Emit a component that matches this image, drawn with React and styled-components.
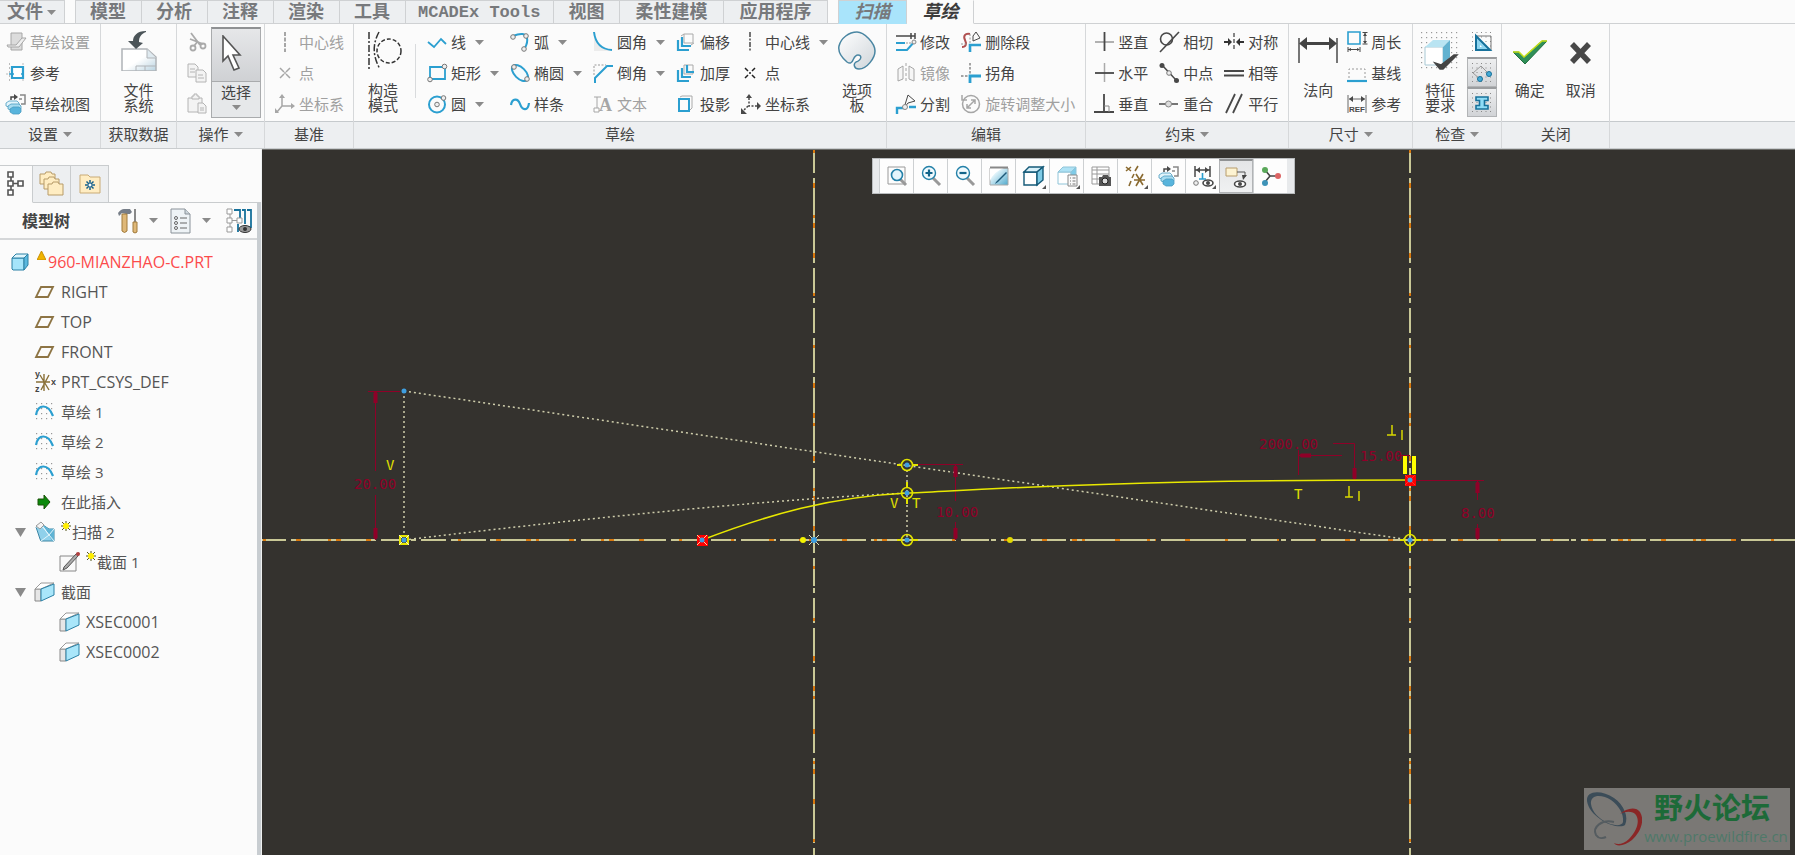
import React from "react";
import styled, { createGlobalStyle, css } from "styled-components";

const BLUE = "#2b9fd0";
const DARK = "#484848";
const GREY = "#a6a6a6";

const GlobalStyle = createGlobalStyle`
  * { box-sizing: border-box; }
  body { margin: 0; background: #fbfbfb; overflow: hidden; }
  button { font: inherit; color: inherit; border: 0; padding: 0; background: none; }
  ul { list-style: none; margin: 0; padding: 0; }
`;

const Shell = styled.div`
  display: flex;
  flex-direction: column;
  height: 100vh;
  font-family: "Open Sans", "Noto Sans CJK SC", sans-serif;
  font-size: 15px;
  color: #444;
  background: #fbfbfb;
`;

/* ---------- tab strip ---------- */

const TabStrip = styled.nav`
  position: relative;
  display: flex;
  height: 24px;
  flex: none;
  border-bottom: 1px solid #cfd1d3;
`;

const Tab = styled.button`
  height: 24px;
  padding: 1px ${(p) => (p.$latin ? "13px" : p.$wide ? "16px" : "15px")} 0 ${(p) => (p.$latin ? "12px" : p.$wide ? "15px" : "14px")};
  display: flex;
  align-items: center;
  flex: none;
  gap: 4px;
  background: #edeff1;
  border: 1px solid #cfd1d3;
  border-left-width: ${(p) => (p.$first ? "1px" : "0")};
  color: #77797c;
  font-family: "Liberation Mono", "Noto Sans CJK SC", monospace;
  font-size: ${(p) => (p.$latin ? "17px" : "18px")};
  font-weight: 700;
  line-height: 20px;
  white-space: nowrap;
  ${(p) => p.$file && css`padding: 1px 8px 0 7px; border-left: 0;`}
  ${(p) => p.$context && css`background: #a9e4fb; font-style: italic; padding: 1px 16px 0 15px; border-bottom-color: #a9e4fb;`}
  ${(p) => p.$active && css`background: #fbfbfb; color: #3c3c3c; font-style: italic; border-color: #fbfbfb #cfd1d3 #fbfbfb #fbfbfb; padding: 1px 15px 0;`}
`;

const TabGap = styled.span`
  width: 10px;
  flex: none;
`;

const Collapse = styled.button`
  margin-left: auto;
  width: 16px;
  height: 8px;
  overflow: hidden;
`;

/* ---------- ribbon ---------- */

const Ribbon = styled.header`
  display: flex;
  flex: none;
  border-bottom: 1px solid #c9ccce;
  background: #fbfbfb;
`;

const GroupBox = styled.section`
  display: flex;
  flex-direction: column;
  flex: ${(p) => (p.$fill ? "1" : "none")};
  border-right: ${(p) => (p.$fill ? "0" : "1px solid #d6d8da")};
`;

const GroupBody = styled.div`
  display: flex;
  height: 97px;
  padding: ${(p) => p.$pad || "0"};
`;

const GroupLabel = styled.div`
  display: flex;
  align-items: center;
  justify-content: center;
  gap: 5px;
  height: 27px;
  padding-bottom: 2px;
  line-height: 20px;
  background: #edeff1;
  border-top: 1px solid #c6cacd;
  white-space: nowrap;
`;

const Columns = styled.div`
  display: flex;
  gap: 11px;
  padding-top: 3px;
`;

const Column = styled.div`
  display: flex;
  flex-direction: column;
  gap: ${(p) => (p.$tight ? "0" : "1px")};
`;

const ToolRow = styled.div`
  display: flex;
  align-items: center;
  height: 30px;
`;

const Tool = styled.button`
  display: flex;
  align-items: center;
  gap: 4px;
  height: 30px;
  line-height: 20px;
  white-space: nowrap;
  color: ${(p) => (p.$off ? "#a0a0a0" : "#444")};
`;

const DropButton = styled.button`
  display: flex;
  align-items: center;
  height: 30px;
  padding-left: 9px;
`;

const BigTool = styled.button`
  display: flex;
  flex-direction: column;
  align-items: center;
  width: ${(p) => p.$width};
  height: 97px;
  padding-top: 7px;
  gap: 11px;
  line-height: 15px;
`;

const BigText = styled.span`
  width: 30px;
  padding-top: 1px;
`;

const Divider = styled.span`
  width: 1px;
  height: 54px;
  margin: 20px 11px 0 3px;
  background: #d9dbdd;
`;

const SelectTool = styled.button`
  display: flex;
  flex-direction: column;
  width: 50px;
  height: 91px;
  margin: 3px 3px 0 4px;
  border: 1px solid #a9abad;
  border-top: 2px solid #8f9193;
  background: #e6e8ea;
`;

const SelectTop = styled.span`
  display: flex;
  align-items: center;
  justify-content: center;
  width: 100%;
  height: 53px;
  background: linear-gradient(#e6e7e9, #cfd1d4);
  border-bottom: 1px solid #a9abad;
`;

const SelectBottom = styled.span`
  display: flex;
  flex-direction: column;
  align-items: center;
  width: 100%;
  gap: 3px;
  line-height: 20px;
`;

const Toggle = styled.button`
  display: flex;
  align-items: center;
  justify-content: center;
  width: 30px;
  height: 30px;
  ${(p) => p.$on && css`
    border: 1px solid #b2b4b6;
    border-top: 2px solid #9b9d9f;
    background: linear-gradient(#eeeff0, #d2d4d7);
  `}
`;

/* ---------- workspace ---------- */

const Workspace = styled.main`
  display: flex;
  flex: 1;
  min-height: 0;
`;

const Sidebar = styled.aside`
  display: flex;
  flex-direction: column;
  flex: none;
  width: 262px;
  padding-top: 16px;
  border-right: 1px solid #eef0f0;
  background: #fbfbfb;
`;

const SideTabs = styled.div`
  display: flex;
  height: 38px;
`;

const SideTab = styled.button`
  display: flex;
  align-items: center;
  justify-content: center;
  width: ${(p) => (p.$active ? "33px" : "38px")};
  height: 38px;
  border: 1px solid #c9ccce;
  border-left-width: 0;
  background: #edeff1;
  ${(p) => p.$active && css`background: #fbfbfb; border-bottom-color: #fbfbfb;`}
`;

const SideTabRest = styled.span`
  flex: 1;
  border-bottom: 1px solid #c9ccce;
`;

const SidePanel = styled.div`
  flex: 1;
  border-right: 4px solid #c8cdd1;
`;

const SideHeader = styled.div`
  display: flex;
  align-items: center;
  height: 37px;
  padding: 0 5px 0 22px;
  border-bottom: 2px solid #d5d7d9;
`;

const SideTitle = styled.h2`
  margin: 0;
  flex: 1;
  font-size: 16px;
  line-height: 20px;
`;

const HeaderButton = styled.button`
  display: flex;
  align-items: center;
  gap: 10px;
  margin-left: ${(p) => p.$space};
`;

const Tree = styled.ul`
  padding-top: 7px;
`;

const TreeRow = styled.li`
  display: flex;
  align-items: center;
  height: 30px;
  line-height: 20px;
  padding-left: ${(p) => [11, 35, 60][p.$level]}px;
  font-size: ${(p) => (p.$latin ? "16px" : "15px")};
  color: ${(p) => (p.$alert ? "#fb4b4b" : "#555")};
  white-space: nowrap;
`;

const Expander = styled.button`
  display: flex;
  width: 20px;
  margin-left: -20px;
`;

const TreeIcon = styled.span`
  display: flex;
  width: 26px;
`;

const Flag = styled.span`
  display: flex;
  height: 22px;
  width: 11px;
`;

/* ---------- canvas ---------- */

const Canvas = styled.div`
  position: relative;
  flex: 1;
  min-width: 0;
  overflow: hidden;
  background: #34322e;
  border-top: 1px solid #6d6d6a;
`;

const Drawing = styled.svg`
  display: block;
  width: 100%;
  height: 100%;
`;

const DimText = styled.text`
  font-family: "DejaVu Sans Mono", monospace;
  font-size: 14px;
  fill: #8f0028;
`;

const MarkText = styled.text`
  font-family: "DejaVu Sans Mono", monospace;
  font-size: 14px;
  fill: #e0e000;
`;

const ViewBar = styled.div`
  position: absolute;
  top: 8px;
  left: 610px;
  display: flex;
  height: 36px;
  padding: 0 7px 0 6px;
  border: 1px solid #b9bcbe;
  background: #e8eaec;
`;

const ViewButton = styled.button`
  display: flex;
  align-items: center;
  justify-content: center;
  position: relative;
  width: 34px;
  height: 34px;
  background: #fdfdfd;
  border-left: 1px solid #cdd0d2;
  ${(p) => p.$on && css`
    background: linear-gradient(#e4e5e7, #f0f1f2);
    border: 1px solid #b2b4b6;
    border-top: 2px solid #8f9193;
  `}
`;

const Corner = styled.span`
  position: absolute;
  right: 3px;
  bottom: 4px;
  border: 2px solid #555;
  border-top-color: transparent;
  border-left-color: transparent;
`;

const Watermark = styled.div`
  position: absolute;
  right: 5px;
  bottom: 5px;
  display: flex;
  justify-content: space-between;
  width: 206px;
  height: 62px;
  background: #7a7875;
`;

const WatermarkText = styled.div`
  display: flex;
  flex-direction: column;
  align-items: center;
  width: 148px;
  flex: none;
`;

const WatermarkName = styled.strong`
  padding-right: 8px;
  font-size: 29px;
  line-height: 39px;
  color: #1d6a38;
`;

const WatermarkLink = styled.a`
  font-size: 15px;
  line-height: 18px;
  color: #4f7869;
  text-decoration: none;
`;

/* ---------- icons ---------- */

const dots = (n, step, off, r, color) => {
  const out = [];
  for (let i = 0; i < n; i++)
    for (let j = 0; j < n; j++)
      out.push(<rect key={`${i}-${j}`} x={off + i * step} y={off + j * step} width={r} height={r} fill={color} />);
  return out;
};

const Knob = ({ x, y }) => <circle cx={x} cy={y} r="2.3" fill="#eee" stroke="#777" strokeWidth="1" />;

const glyphs = {
  setup: <g fill="#dcdcdc" stroke={GREY}><path d="M5 1h11v17H5z" /><path d="M1 13h9l6-7h4l-7 9H2z" fill="#eee" /></g>,
  refs: <g fill="none"><path d="M3.500 0v20M0 11h20M17 0v20" stroke="#bbb" strokeDasharray="2 2" /><path d="M6 4h11v11H6z" fill="#fff" stroke={BLUE} strokeWidth="2.200" /><path d="M3 11h5M15 11h3" stroke={BLUE} strokeWidth="1.500" /></g>,
  sketchView: <g><path d="M5 6V3h5" fill="none" stroke={DARK} strokeWidth="1.500" /><path d="M8 0l4 3-4 3z" fill={DARK} /><path d="M14 1h5v9h-4M13 5h3" fill="none" stroke="#888" strokeWidth="1.500" /><g stroke="#4a9cc0" strokeWidth=".8"><path d="M0 9l3-2h8l2 2v3l-2 1H3L0 12z" fill="#e2f4fb" /><path d="M2 12l3-2h8l2 2v3l-2 1H5l-3-1z" fill="#a8dcf0" /><path d="M4 15l3-2h6l2 2v3l-2 2H7l-3-2z" fill="#58b4dc" /></g></g>,
  cut: <g stroke="#aaa" strokeWidth="1.800" fill="none"><path d="M4 1l9 12M3 7l13 5" /><circle cx="16" cy="14" r="2.500" /><circle cx="6" cy="16" r="2.500" /><path d="M7 14l4-5" /></g>,
  copy: <g fill="#f3f3f3" stroke="#b4b4b4"><path d="M1 1h7l3 3v10H1z" /><path d="M9 7h7l3 3v9H9z" /><path d="M3 6h5M3 9h5M11 12h5M11 15h6" /></g>,
  paste: <g fill="#f3f3f3" stroke="#b4b4b4"><path d="M1 4h14v14H1z" /><path d="M5 5V2h2V0h3v2h2v3z" /><path d="M11 9h5l3 3v7h-8z" /><path d="M13 14h4M13 16h4" /></g>,
  centerGrey: <path d="M10 0v20" stroke={GREY} strokeWidth="2" strokeDasharray="4 1.500" />,
  pointGrey: <g stroke={GREY} strokeWidth="1.500"><path d="M5 5l4 4M11 11l4 4M15 5l-4 4M9 11l-4 4M9 10h2" /></g>,
  csysGrey: <g stroke={GREY} strokeWidth="1.500" fill={GREY}><path d="M7 3v9h10M7 12l-5 6" fill="none" /><path d="M7 0l3 4H4zM20 12l-4-3v6zM0 19v-5l4 5z" strokeWidth="0" /></g>,
  line: <path d="M1 10l6 5 7-8 5 5" fill="none" stroke={BLUE} strokeWidth="1.800" />,
  rect: <g><path d="M3 4h15v12H3z" fill="none" stroke={BLUE} strokeWidth="1.800" /><Knob x={17.500} y={3.500} /><Knob x={3} y={16.500} /></g>,
  circle: <g><circle cx="10" cy="10.500" r="8" fill="none" stroke={BLUE} strokeWidth="2" /><Knob x={10} y={10.500} /><Knob x={16.500} y={4} /></g>,
  arc: <g><path d="M3 4q12-5 14 2 1 4-2 10" fill="none" stroke={BLUE} strokeWidth="2" /><Knob x={3} y={5} /><Knob x={16} y={4} /><Knob x={14} y={17} /></g>,
  ellipse: <g><ellipse cx="10" cy="10" rx="10" ry="5.500" transform="rotate(45 10 10)" fill="#f5fbfd" stroke={BLUE} strokeWidth="2" /><Knob x={4} y={4} /><Knob x={17} y={16} /></g>,
  spline: <path d="M1 11c1-7 7-7 9-1s8 8 9-1" fill="none" stroke={BLUE} strokeWidth="2.200" />,
  fillet: <g><path d="M1 1v18h18Q4 15 1 1z" fill="#ececec" /><path d="M1 0q2 17 18 18" fill="none" stroke={BLUE} strokeWidth="2" /></g>,
  chamfer: <g fill="none"><path d="M1 12V2h12" stroke="#999" strokeDasharray="2 1.500" /><path d="M2 20v-5L14 3h6" stroke={BLUE} strokeWidth="2" /></g>,
  text: <g><path d="M4 3v12M1 3h7" stroke={GREY} fill="none" /><path d="M1 14h5v4H1z" fill="#fff" stroke={GREY} /><text x="6" y="17" fontFamily="Liberation Serif" fontWeight="700" fontSize="18" fill={GREY}>A</text></g>,
  offset: <g fill="none"><path d="M8 2h9v9H8zM5 4l3-2M15 13l3-2" stroke="#aaa" /><path d="M6 5v9h9" stroke={BLUE} strokeWidth="2.200" /><path d="M2 8v10h11" stroke={BLUE} strokeWidth="2.200" /></g>,
  thicken: <g fill="none"><path d="M8 2h9v9H8z" stroke="#aaa" /><path d="M2 7v11h11M6 5v9h9M11 2v7h7" stroke={BLUE} strokeWidth="2.200" /></g>,
  project: <g fill="none"><path d="M3 5h10v12H3z" stroke={BLUE} strokeWidth="2" /><path d="M4 3l2-1h10v12l-2 2" stroke="#aaa" /></g>,
  center: <path d="M9 0v20" stroke={DARK} strokeWidth="1.500" strokeDasharray="5 1.500 2 1.500" />,
  point: <g stroke="#222" strokeWidth="1.500"><path d="M4 5l3 3M11 12l3 3M14 5l-3 3M7 12l-3 3M8 10h2" /></g>,
  csys: <g fill={DARK}><path d="M8 4v8h8M7 12l-5 5" fill="none" stroke={DARK} strokeWidth="1.500" strokeDasharray="2 1.500" /><path d="M8 0l3 4H5zM20 12l-4-4v8zM0 20v-6l6 6z" /></g>,
  modify: <g fill="none"><path d="M0 4h19M15 1v6M19 1v6" stroke={DARK} strokeWidth="1.500" /><path d="M0 11h9M0 18h11l8-9" stroke={BLUE} strokeWidth="2" /><path d="M10 11h7" stroke="#999" strokeDasharray="2 1" /><circle cx="18" cy="10" r="2" fill="#eee" stroke="#888" /></g>,
  mirror: <g fill="#f6f6f6" stroke={GREY}><path d="M2 6l5-3v13l-5 2zM18 6l-5-3v13l5 2z" /><path d="M10 0v20" strokeDasharray="3 2" /></g>,
  split: <g fill="none"><path d="M1 20v-6h7M13 13h7" stroke={BLUE} strokeWidth="2.400" /><path d="M8 14l4-13 7 6-7 2z" stroke={DARK} /><circle cx="9" cy="13" r="2.500" fill="#eee" stroke="#888" /></g>,
  del: <g fill="none"><path d="M9 2C4 1 2 4 4 8s1 7-3 7" stroke="#b05050" strokeWidth="2" /><path d="M9 20v-7h11" stroke={BLUE} strokeWidth="2.600" /><path d="M9 2v9M0 12h6" stroke="#999" strokeDasharray="2 1.500" /><path d="M12 4l3-4 4 6-7 3z" stroke={DARK} /></g>,
  corner: <g fill="none"><path d="M9 20v-7h11" stroke={BLUE} strokeWidth="2.800" /><path d="M9 0v11M0 13h7" stroke="#888" strokeWidth="1.500" strokeDasharray="2.500 1.500" /></g>,
  rotate: <g fill="none" stroke={GREY} strokeWidth="1.500"><circle cx="10" cy="10" r="8.500" /><path d="M6 14l8-8M6 10v4h4M10 6h4v4M1 1v5h5" /></g>,
  vert: <g><path d="M1 10h19" stroke="#999" strokeWidth="1.500" /><path d="M10.500 0v19" stroke={DARK} strokeWidth="1.800" /></g>,
  horiz: <g><path d="M10.500 0v19" stroke="#aaa" strokeWidth="1.500" /><path d="M1 10h19" stroke={DARK} strokeWidth="1.800" /></g>,
  perp: <g fill="none"><path d="M10 0v18M0 18h20" stroke={DARK} strokeWidth="1.800" /><path d="M10 12h5v6" stroke="#888" /></g>,
  tangent: <g fill="none" stroke={DARK} strokeWidth="1.600"><circle cx="7.500" cy="7" r="6" /><path d="M1 20L20 0" /></g>,
  mid: <g><path d="M3 2l14 15" stroke={DARK} strokeWidth="1.500" /><circle cx="3" cy="2.500" r="2.500" fill={DARK} /><circle cx="17.500" cy="17.500" r="2.500" fill={DARK} /><Knob x={10} y={10} /></g>,
  coin: <g><path d="M0 10h19" stroke={DARK} strokeWidth="1.500" /><circle cx="9.500" cy="10" r="3" fill="#ddd" stroke="#888" /></g>,
  sym: <g><path d="M10 1v18" stroke="#555" strokeWidth="1.400" strokeDasharray="4 2" /><path d="M0 10h5M15 10h5" stroke="#333" strokeWidth="1.800" /><path d="M8 10L4 6v8zM12 10l4-4v8z" fill="#333" /></g>,
  equal: <path d="M0 8h20M0 12.500h20" stroke={DARK} strokeWidth="1.800" />,
  parallel: <path d="M2 19L11 0M9 19L18 0" stroke={DARK} strokeWidth="1.800" />,
  perim: <g fill="none"><path d="M1 0h12v12H1z" stroke={BLUE} strokeWidth="1.600" /><path d="M15.500.5h5M15.500 12h5M18 1v10M1 15v5M13 15v5M1 17.500h11" stroke={DARK} /><path d="M16 4l2-3 2 3zM16 9l2 3 2-3zM4 16l-3 1.500L4 19zM10 16l3 1.500L10 19z" fill={DARK} /></g>,
  baseline: <g fill="none"><path d="M2 15V6h16v9" stroke="#999" strokeDasharray="2 2" /><path d="M0 18h20" stroke={BLUE} strokeWidth="2.200" /></g>,
  refdim: <g><path d="M1 1v18M19 1v18M2 5h16" stroke="#666" fill="none" /><path d="M6 2L2 5l4 3zM14 2l4 3-4 3z" fill={DARK} /><text x="2" y="18" fontFamily="Liberation Sans" fontWeight="700" fontSize="8" fill={DARK}>REF</text></g>,
  chkTri: <g>{dots(5, 4.500, 0, 1, "#888")}<path d="M4 4h15v14" fill="none" stroke="#777" /><path d="M4 4v14h14z" fill="#8fd5f0" stroke="#17719b" strokeWidth="2" /><path d="M8 13v2h2z" fill="#fff" /></g>,
  chkEnds: <g>{dots(5, 4.500, 0, 1, "#888")}<path d="M8 16L1 10l8-7 8 8" fill="none" stroke="#999" /><circle cx="17" cy="11" r="2.500" fill="#45aad5" stroke="#17719b" /><circle cx="8" cy="16" r="2.500" fill="#45aad5" stroke="#17719b" /></g>,
  chkI: <g>{dots(5, 4.500, 0, 1, "#888")}<path d="M4 4h12v3.500h-3.500v5H16V16H4v-3.500h3.500v-5H4z" fill="#8fdcf6" stroke="#17719b" strokeWidth="1.600" /></g>,

  zoomFit: <g><path d="M1 1h17v17H1z" fill="none" stroke="#999" /><path d="M13 13l6 6" stroke="#999" strokeWidth="3" /><circle cx="10" cy="9" r="5.500" fill="#e4f5fc" stroke="#2380a8" strokeWidth="1.600" /></g>,
  zoomIn: <g><path d="M12 12l7 7" stroke="#999" strokeWidth="3" /><circle cx="8" cy="7" r="6.500" fill="#f0fafe" stroke="#2380a8" strokeWidth="1.400" /><path d="M8 3.500v7M4.500 7h7" stroke="#12648a" strokeWidth="2.200" /></g>,
  zoomOut: <g><path d="M12 12l7 7" stroke="#999" strokeWidth="3" /><circle cx="8" cy="7" r="6.500" fill="#f0fafe" stroke="#2380a8" strokeWidth="1.400" /><path d="M4.500 7h7" stroke="#12648a" strokeWidth="2.200" /></g>,
  repaint: <g><defs><linearGradient id="wipe" x1="0" y1="0" x2="1" y2="1"><stop offset=".3" stopColor="#e4f5fb" /><stop offset="1" stopColor="#4fa9cc" /></linearGradient></defs><path d="M1 2h18v17H1z" fill="url(#wipe)" stroke="#aaa" /><path d="M1 2h14Q4 6 1 15z" fill="#fff" /><path d="M1 1.500h18" stroke="#888" strokeWidth="2" /><path d="M6 18l1-2 10-10 1 1L9 16z" fill="#1d5878" /></g>,
  cube: <g stroke="#155a78" strokeWidth="1.400"><path d="M1 6h13v13H1z" fill="#fff" /><path d="M1 6l5-5h14l-6 5z" fill="#d8f1fa" /><path d="M14 6l6-5v13l-6 5z" fill="#7fcbe6" /></g>,
  views: <g stroke="#8fc4d8"><path d="M1 6h13v12H1z" fill="#fff" /><path d="M1 6l5-5h13l-5 5z" fill="#aee2f5" /><path d="M14 6l5-5v13l-5 4z" fill="#7ecbe8" /><path d="M11 9h9v11h-9z" fill="#fafafa" stroke="#888" /><path d="M13 12h1m1.500 0h3M13 15h1m1.500 0h3M13 18h1m1.500 0h3" stroke="#777" /></g>,
  camera: <g><path d="M1 1h17v17H1zM1 4h17M1 8h17M1 13h8M6 1v17" fill="#fff" stroke="#999" /><path d="M8 11h3l1-2h5l1 2h2v9H8z" fill="#555" /><circle cx="14" cy="15" r="3" fill="#ddd" stroke="#222" /></g>,
  datum: <g stroke="#8a6a30" strokeWidth="1.600" fill="none"><path d="M1 1l5 4M6 1L1 5" /><path d="M13 0l-3 5M9 8l-2 4M6 15l-2 5" /><path d="M11 8l7 11M18 8l-7 12M9 14h11" /></g>,
  dimEye: <g><path d="M2 0v11M17 0v11M2 4h15" stroke={DARK} strokeWidth="1.500" /><path d="M7 1L3 4l4 3zM12 1l4 3-4 3z" fill={DARK} /><path d="M9.500 7v6M6 13h7" stroke={BLUE} strokeWidth="1.600" /><circle cx="3" cy="17" r="2.300" fill="#eee" stroke="#777" /><ellipse cx="15" cy="17" rx="5" ry="3" fill="#fff" stroke={DARK} strokeWidth="1.600" /><circle cx="15" cy="17" r="2" fill={DARK} /></g>,
  noteEye: <g><path d="M0 1h11v8H0z" fill="#fdf3d2" stroke="#b79c6c" /><path d="M11 5h8v5" fill="none" stroke="#555" /><path d="M16 8h5l-4 5z" fill="#444" /><ellipse cx="14" cy="17" rx="5.500" ry="3" fill="#fff" stroke={DARK} strokeWidth="1.600" /><circle cx="14" cy="17" r="2" fill={DARK} /></g>,
  spin: <g><path d="M4 4l5 6-5 6M9 10h7" fill="none" stroke="#444" strokeWidth="1.600" /><circle cx="4" cy="4" r="3" fill="#5aa85a" /><circle cx="4" cy="17" r="3" fill="#3e93b8" /><circle cx="17" cy="10" r="3" fill="#dc6464" /></g>,

  part: <g stroke="#2a80a5"><path d="M1 6h12v12H2l-1-1z" fill="#a5e5fb" /><path d="M1 6l4-4h12l-4 4z" fill="#dff6fd" /><path d="M13 6l4-4v11l-4 5z" fill="#5ab8de" /></g>,
  plane: <path d="M6 5h12l-5 10H1z" fill="none" stroke="#8d7444" strokeWidth="1.800" />,
  treeCsys: <g><path d="M1 10h14M9 2v17M5 3l9 15M14 3L6 18" stroke="#8a7138" strokeWidth="1.400" /><g fontFamily="Liberation Sans" fontWeight="700" fontSize="9" fill="#444"><text x="0" y="5">y</text><text x="16" y="13">x</text><text x="0" y="20">z</text></g></g>,
  sketch: <g>{dots(4, 5, 1, 1.200, "#999")}<path d="M1 13C3 2 13 1 18 14" fill="none" stroke={BLUE} strokeWidth="2.200" /></g>,
  insert: <path d="M3 7h6V3l6 7-6 7v-4H3z" fill="#0c8a0c" stroke="#1a5208" />,
  sweep: <g strokeLinejoin="round"><path d="M1 5l4 12 1 2h13V7h-5L8 3z" fill="#8fd0ea" stroke="#3d86a4" /><path d="M8 3l6 4 5 0v12h-2z" fill="#5fb3d4" /><path d="M8 5l6 8 5-6M6 19l8-6 5 6M1 5l7 0 6 8" fill="none" stroke="#e2f5fc" /><path d="M1 4l5-4 3 3-4 4z" fill="#f4f4f4" stroke="#999" /></g>,
  section: <g><path d="M0 4h16v15H0z" fill="#f9f9f9" stroke="#888" /><path d="M4 15L16 2l3-1-1 3L7 16l-4 2z" fill="#aaa" stroke="#555" /><circle cx="18" cy="2" r="2" fill="#b04040" /></g>,
  xsec: <g><path d="M0 7h6v12H0z" fill="#e6e6e6" stroke="#888" /><path d="M0 7l6-6h13L6 7z" fill="#fff" stroke="#999" /><path d="M6 7l13-5v11L6 19z" fill="#a9e6fa" stroke="#2a80a5" /></g>,
};

const Icon = ({ name, size = 20 }) => (
  <svg width={size} height={size} viewBox="0 0 20 20" overflow="visible" aria-hidden="true">
    {glyphs[name]}
  </svg>
);

const Arrow = ({ size = 9, color = "#8a8a8a" }) => (
  <svg width={size} height={size === 9 ? 5 : 9} viewBox="0 0 9 5" preserveAspectRatio="none" aria-hidden="true">
    <path d="M0 0h9L4.500 5z" fill={color} />
  </svg>
);

const bigGlyphs = {
  file: <g><defs><linearGradient id="sheet" x1="0" y1="0" x2="1" y2="1"><stop offset=".5" stopColor="#fff" /><stop offset="1" stopColor="#b8d2e0" /></linearGradient></defs><path d="M3 18h25l9 8v14H3z" fill="url(#sheet)" stroke="#b0b4b8" strokeWidth="1.500" /><path d="M28 18v9h9" fill="#dfeaf0" stroke="#b0b4b8" /><path d="M17 40v-5h20M26 35v5" stroke="#b0b4b8" fill="none" /><path d="M27 0C18 0 14 5 14 10H9l8 8 7-6-4-1c0-5 2-8 7-10z" fill="#4b5458" /></g>,
  construct: <g fill="none" stroke="#333" strokeWidth="1.500"><path d="M6 1v37" strokeDasharray="7 2 2 2" /><path d="M16 1q-10 18 1 37" strokeDasharray="7 2 2 2" /><circle cx="26" cy="20" r="12" strokeDasharray="4 2" /></g>,
  palette: <g><defs><linearGradient id="pal" x1="0" y1="0" x2="1" y2="1"><stop offset="0" stopColor="#fff" /><stop offset="1" stopColor="#cfd5da" /></linearGradient></defs><path d="M10 31C4 26 1 20 2 15 4 7 12 1 20 1c7 0 18 11 18 19 0 7-8 18-16 18-5 0-6-5-3-7 6-2 6-7 2-7-3 0-4 3-5 5-1 3-3 4-6 2z" fill="url(#pal)" stroke="#4a86a2" strokeWidth="1.500" /></g>,
  normal: <g><path d="M1 7v25M39 7v25M6 12h28" stroke="#555" strokeWidth="1.600" /><path d="M6 12.500h28" stroke="#444" strokeWidth="3" /><path d="M9 6L1 12.500 9 19zM31 6l8 6.500L31 19z" fill="#444" /></g>,
  feature: <g>{dots(8, 5, 1, 1.200, "#999")}<path d="M5 16h18v18H5z" fill="#fff" stroke="#a8c8d4" /><path d="M5 16l8-7h17l-7 7z" fill="#b9e4f2" /><path d="M23 16l7-7v17l-7 8z" fill="#62b2d0" /><path d="M15 32l6 2L34 24h3L23 38h-3z" fill="#444" stroke="#444" strokeWidth="1.500" /></g>,
  ok: <g><path d="M3 21h6l5 5L32 10h5L15 33z" fill="#2f8f58" stroke="#22703f" /><path d="M3 21h6l5 5L32 10h5" fill="none" stroke="#c4e01a" strokeWidth="1.500" /></g>,
  cancel: <path d="M11 13l17 18M28 13L11 31" stroke="#484848" strokeWidth="5.500" fill="none" />,
  pointer: <path d="M7 1v25l5-5 6 14 5-2-6-13h7z" fill="#fff" stroke="#555" strokeWidth="1.600" />,
};

const BigIcon = ({ name }) => (
  <svg width="40" height="40" viewBox="0 0 40 40" aria-hidden="true">
    {bigGlyphs[name]}
  </svg>
);

const ToolColumn = ({ items }) => (
  <Column>
    {items.map(([icon, label, drop, off, name]) => (
      <ToolRow key={icon}>
        <Tool $off={off} disabled={!!off} aria-label={name}>
          <Icon name={icon} />
          {label}
        </Tool>
        {drop && (
          <DropButton aria-label={`${label} 选项`}>
            <Arrow />
          </DropButton>
        )}
      </ToolRow>
    ))}
  </Column>
);

const Big = ({ icon, label, width }) => (
  <BigTool $width={width}>
    <BigIcon name={icon} />
    <BigText>{label}</BigText>
  </BigTool>
);

const Group = ({ label, drop, pad, fill, children }) => (
  <GroupBox $fill={fill}>
    <GroupBody $pad={pad}>{children}</GroupBody>
    <GroupLabel>
      {label}
      {drop && <Arrow />}
    </GroupLabel>
  </GroupBox>
);

/* ---------- sidebar ---------- */

const TreeTabIcon = () => (
  <svg width="18" height="26" viewBox="0 0 18 26" fill="#fff" stroke="#555" strokeWidth="1.600" aria-hidden="true">
    <path d="M4 6v14M6 12.500h6" />
    <path d="M1 1h5v5H1zM1 10h5v5H1zM1 19h5v5H1zM11 10h5v5h-5z" />
  </svg>
);

const FoldersIcon = () => (
  <svg width="26" height="26" viewBox="0 0 26 26" fill="#ffedc2" stroke="#b79b68" aria-hidden="true">
    <path d="M1 3h5l1-2h5l1 2h3v10H1z" />
    <path d="M5 8h4l1-2h5l1 2h4v10H5z" />
    <path d="M9 13h4l1-2h5l1 2h4v11H9z" />
  </svg>
);

const FavoriteIcon = () => (
  <svg width="24" height="22" viewBox="0 0 24 22" aria-hidden="true">
    <path d="M2 4V2h8l2 2h10v16H2z" fill="#ffedc2" stroke="#c9ab76" />
    <path d="M12 7v10M7 12h10M8.500 8.500l7 7M15.500 8.500l-7 7" stroke="#17628c" strokeWidth="1.500" />
    <circle cx="12" cy="12" r="1.500" fill="#fff" />
  </svg>
);

const ToolsIcon = () => (
  <svg width="22" height="26" viewBox="0 0 22 26" aria-hidden="true">
    <path d="M1 5q3-4 6-4h6l2 3-2 2H9L5 5 2 8z" fill="#777e88" />
    <path d="M5 6h5v17q-2.500 3-5 0z" fill="#dfb878" stroke="#a07a3c" />
    <path d="M18 1v14" stroke="#888" strokeWidth="2" />
    <path d="M16 14h4v10q-2 2-4 0z" fill="#dfb878" stroke="#a07a3c" />
  </svg>
);

const ListIcon = () => (
  <svg width="22" height="26" viewBox="0 0 22 26" aria-hidden="true">
    <path d="M1 1h14l5 5v19H1z" fill="#eef3f6" stroke="#8a9299" />
    <path d="M15 1v5h5" fill="#cdd6dc" stroke="#8a9299" />
    <path d="M10 10h7M10 15h7M10 20h7" stroke="#666" />
    <g fill="none" stroke="#666"><circle cx="6" cy="10" r="1.500" /><circle cx="6" cy="15" r="1.500" /><circle cx="6" cy="20" r="1.500" /></g>
  </svg>
);

const TreeColumnsIcon = () => (
  <svg width="26" height="26" viewBox="0 0 26 26" fill="none" aria-hidden="true">
    <path d="M4 6v14M6 12.500h6" stroke="#999" />
    <path d="M8 2h6v8M16 2h3v14M21 2h4v17h-3M12 16v8" stroke="#17719b" strokeWidth="1.800" />
    <path d="M1 1h5v5H1zM1 10h5v5H1zM1 19h5v5H1zM11 10h5v5h-5z" fill="#fff" stroke="#999" />
    <ellipse cx="19" cy="21" rx="6" ry="3.500" fill="#999" stroke="#333" />
    <circle cx="19" cy="21" r="2" fill="#333" />
  </svg>
);

const Warning = () => (
  <svg width="9" height="9" viewBox="0 0 9 9" aria-hidden="true">
    <path d="M4.500 0L9 9H0z" fill="#f0b400" stroke="#c98f00" />
  </svg>
);

const Fresh = () => (
  <svg width="10" height="10" viewBox="0 0 10 10" aria-hidden="true">
    <path d="M5 0v10M0 5h10M1 1l8 8M9 1L1 9" stroke="#55551a" />
    <circle cx="5" cy="5" r="3" fill="#ffee00" />
  </svg>
);

const tree = [
  [0, "part", "960-MIANZHAO-C.PRT", "warn"],
  [1, "plane", "RIGHT"],
  [1, "plane", "TOP"],
  [1, "plane", "FRONT"],
  [1, "treeCsys", "PRT_CSYS_DEF"],
  [1, "sketch", "草绘 1"],
  [1, "sketch", "草绘 2"],
  [1, "sketch", "草绘 3"],
  [1, "insert", "在此插入"],
  [1, "sweep", "扫描 2", "new", true],
  [2, "section", "截面 1", "new"],
  [1, "xsec", "截面", null, true],
  [2, "xsec", "XSEC0001"],
  [2, "xsec", "XSEC0002"],
];

/* ---------- sketch drawing ---------- */

const Axis = ({ d }) => (
  <g fill="none" strokeWidth="2">
    <path d={d} stroke="#c9c896" />
    <path d={d} stroke="#d9770c" strokeDasharray="5 27 3 5 5 25 5 35 3 49 3 35 5 25 5 5 3 30" strokeDashoffset="-34" />
    <path d={d} stroke="#34322e" strokeDasharray="5 85 5 28 2 5 5 25 5 35 4 86" strokeDashoffset="-24" />
  </g>
);

const ticks = {
  h: "M-10 0h5M6 0h5",
  v: "M0-11v5M0 6v5",
  both: "M-10 0h5M6 0h5M0-10v5M0 6v5",
};

const Node = ({ x, y, tick }) => (
  <g transform={`translate(${x} ${y})`} fill="none" stroke="#e2e200" strokeWidth="1.600">
    <circle r="5.500" />
    <path d={ticks[tick]} strokeWidth="2" />
    <circle r="2.500" fill="#3f9fe0" stroke="none" />
  </g>
);

const EndPoint = ({ x, y, fill, cross = "#ffd0a0" }) => (
  <g transform={`translate(${x} ${y})`}>
    <rect x="-5" y="-5" width="11" height="11" fill={fill} />
    <path d="M-5-5L5 5M5-5L-5 5" stroke={cross} />
    <circle r="2.500" fill="#3f9fe0" />
  </g>
);

const SketchDrawing = () => (
  <Drawing role="img" aria-label="草绘截面">
    <g transform="translate(-262 -150)">
      <Axis d="M814 149V2000" />
      <Axis d="M1410 149V2000" />
      <Axis d="M262 540H4000" />
      <g fill="none" stroke="#cfceac" strokeWidth="1.500" strokeDasharray="2 3">
        <path d="M404 391v149M404 391L1410 540M404 540Q720 502 907 493M907 465v75" />
      </g>
      <g fill="none" stroke="#8f0028" strokeWidth="1">
        <path d="M368 391.500h32M375.500 392v79M375.500 495v45M912 464.500h51M955.500 465v36M955.500 522v18" />
        <path d="M1333 443.500h21.500v36M1298.500 450v25M1298 455.500h44M1398 455.500h12M1415 480.500h69M1477.500 481v19M1477.500 524v15" />
      </g>
      <g fill="#8f0028">
        <path d="M375.500 391l2 2v10h-4v-10zM375.500 540l2-2v-10h-4v10zM955.500 465l2 2v10h-4v-10zM955.500 540l2-2v-10h-4v10zM1354.500 480l2-2v-10h-4v10zM1299 455.500l2-2h10v4h-10zM1477.500 481l2 2v10h-4v-10zM1477.500 540l2-2v-10h-4v10z" />
      </g>
      <DimText x="354" y="489">20.00</DimText>
      <DimText x="936" y="517">10.00</DimText>
      <DimText x="1259" y="449">2000.00</DimText>
      <DimText x="1360" y="461">15.00</DimText>
      <DimText x="1461" y="518">8.00</DimText>
      <path d="M702 540C770 514 830 497 907 493C960 491 1100 480 1410 480" fill="none" stroke="#e8e800" strokeWidth="1.500" />
      <g stroke="#d8d800" fill="none" strokeWidth="1.500">
        <path d="M1345 497h8M1349 486v11M1359 491v10M1387 435h9M1392 425v10M1402 430v10" />
      </g>
      <MarkText x="386" y="470">V</MarkText>
      <MarkText x="890" y="508">V</MarkText>
      <MarkText x="912" y="508">T</MarkText>
      <MarkText x="1294" y="499">T</MarkText>
      <path d="M1403 456h4v18h-4zM1412 456h4v18h-4z" fill="#ffff00" />
      <path d="M809 535l10 10M819 535l-10 10" stroke="#e0e0c0" />
      <circle cx="814" cy="540" r="3" fill="#3f9fe0" />
      <circle cx="803" cy="540" r="3" fill="#f4f400" />
      <circle cx="1010" cy="540" r="3" fill="#e0d800" />
      <circle cx="404" cy="391" r="2.500" fill="#3f9fe0" />
      <g transform="translate(404 540)">
        <path d="M-4-4h8v8h-8z" fill="#55542c" stroke="#e8e800" strokeWidth="2" />
        <path d="M-5-5L5 5M5-5L-5 5" stroke="#f4f4d8" />
        <circle r="2.500" fill="#3f9fe0" />
      </g>
      <EndPoint x={702} y={540} fill="#ff0000" />
      <EndPoint x={1410} y={480} fill="#ff0000" cross="#ff3030" />
      <Node x={907} y={465} tick="h" />
      <Node x={907} y={493} tick="v" />
      <Node x={907} y={540} tick="h" />
      <Node x={1410} y={540} tick="both" />
    </g>
  </Drawing>
);

const viewTools = [
  ["zoomFit", "重新调整"],
  ["zoomIn", "放大"],
  ["zoomOut", "缩小"],
  ["repaint", "重画"],
  ["cube", "显示样式", true],
  ["views", "已保存方向", true],
  ["camera", "视图管理器"],
  ["datum", "基准显示", true],
  ["sketchView", "草绘视图"],
  ["dimEye", "草绘器显示", true],
  ["noteEye", "注释显示", false, true],
  ["spin", "旋转中心"],
];

export default function App() {
  return (
    <Shell>
      <GlobalStyle />
      <TabStrip>
        <Tab $file>文件<Arrow /></Tab>
        <TabGap />
        <Tab $first>模型</Tab>
        {["分析", "注释", "渲染", "工具"].map((t) => <Tab key={t}>{t}</Tab>)}
        <Tab $latin>MCADEx Tools</Tab>
        <Tab>视图</Tab>
        <Tab $wide>柔性建模</Tab>
        <Tab $wide>应用程序</Tab>
        <TabGap />
        <Tab $context $first>扫描</Tab>
        <Tab $active>草绘</Tab>
        <Collapse aria-label="最小化功能区">
          <svg width="16" height="8" viewBox="0 0 16 8" fill="none" stroke="#999">
            <path d="M2 4l4-6M14 4l-4-6M2 4h3l3-4 3 4h3" />
          </svg>
        </Collapse>
      </TabStrip>

      <Ribbon>
        <Group label="设置" drop pad="0 10px 0 6px">
          <Columns>
            <ToolColumn items={[["setup", "草绘设置", false, true], ["refs", "参考"], ["sketchView", "草绘视图"]]} />
          </Columns>
        </Group>
        <Group label="获取数据">
          <Big icon="file" label="文件系统" width="75px" />
        </Group>
        <Group label="操作" drop pad="0 0 0 10px">
          <Columns>
            <ToolColumn items={[["cut", "", false, true, "剪切"], ["copy", "", false, true, "复制"], ["paste", "", false, true, "粘贴"]]} />
          </Columns>
          <SelectTool aria-pressed="true">
            <SelectTop><BigIcon name="pointer" /></SelectTop>
            <SelectBottom>选择<Arrow /></SelectBottom>
          </SelectTool>
        </Group>
        <Group label="基准" pad="0 9px 0 10px">
          <Columns>
            <ToolColumn items={[["centerGrey", "中心线", false, true], ["pointGrey", "点", false, true], ["csysGrey", "坐标系", false, true]]} />
          </Columns>
        </Group>
        <Group label="草绘">
          <Big icon="construct" label="构造模式" width="58px" />
          <Divider />
          <Columns>
            <ToolColumn items={[["line", "线", true], ["rect", "矩形", true], ["circle", "圆", true]]} />
            <ToolColumn items={[["arc", "弧", true], ["ellipse", "椭圆", true], ["spline", "样条"]]} />
            <ToolColumn items={[["fillet", "圆角", true], ["chamfer", "倒角", true], ["text", "文本", false, true]]} />
            <ToolColumn items={[["offset", "偏移"], ["thicken", "加厚"], ["project", "投影"]]} />
            <ToolColumn items={[["center", "中心线", true], ["point", "点"], ["csys", "坐标系"]]} />
          </Columns>
          <Big icon="palette" label="选项板" width="58px" />
        </Group>
        <Group label="编辑" pad="0 10px 0 9px">
          <Columns>
            <ToolColumn items={[["modify", "修改"], ["mirror", "镜像", false, true], ["split", "分割"]]} />
            <ToolColumn items={[["del", "删除段"], ["corner", "拐角"], ["rotate", "旋转调整大小", false, true]]} />
          </Columns>
        </Group>
        <Group label="约束" drop pad="0 10px 0 8px">
          <Columns>
            <ToolColumn items={[["vert", "竖直"], ["horiz", "水平"], ["perp", "垂直"]]} />
            <ToolColumn items={[["tangent", "相切"], ["mid", "中点"], ["coin", "重合"]]} />
            <ToolColumn items={[["sym", "对称"], ["equal", "相等"], ["parallel", "平行"]]} />
          </Columns>
        </Group>
        <Group label="尺寸" drop pad="0 11px 0 0">
          <Big icon="normal" label="法向" width="58px" />
          <Columns>
            <ToolColumn items={[["perim", "周长"], ["baseline", "基线"], ["refdim", "参考"]]} />
          </Columns>
        </Group>
        <Group label="检查" drop pad="0 4px 0 0">
          <Big icon="feature" label="特征要求" width="54px" />
          <Columns>
            <Column $tight>
              <Toggle aria-label="着色封闭环"><Icon name="chkTri" /></Toggle>
              <Toggle $on aria-label="突出显示开放端"><Icon name="chkEnds" /></Toggle>
              <Toggle $on aria-label="重叠几何"><Icon name="chkI" /></Toggle>
            </Column>
          </Columns>
        </Group>
        <Group label="关闭" pad="0 3px 0 2px">
          <Big icon="ok" label="确定" width="51px" />
          <Big icon="cancel" label="取消" width="51px" />
        </Group>
        <Group label="" fill />
      </Ribbon>

      <Workspace>
        <Sidebar>
          <SideTabs>
            <SideTab $active aria-label="模型树"><TreeTabIcon /></SideTab>
            <SideTab aria-label="文件夹浏览器"><FoldersIcon /></SideTab>
            <SideTab aria-label="收藏夹"><FavoriteIcon /></SideTab>
            <SideTabRest />
          </SideTabs>
          <SidePanel>
            <SideHeader>
              <SideTitle>模型树</SideTitle>
              <HeaderButton aria-label="设置"><ToolsIcon /><Arrow /></HeaderButton>
              <HeaderButton $space="12px" aria-label="显示"><ListIcon /><Arrow /></HeaderButton>
              <HeaderButton $space="15px" aria-label="树列"><TreeColumnsIcon /></HeaderButton>
            </SideHeader>
            <Tree>
              {tree.map(([level, icon, label, flag, open]) => (
                <TreeRow key={label} $level={level} $alert={flag === "warn"} $latin={/^[\x20-\x7e]+$/.test(label)}>
                  {open && <Expander aria-label={`折叠 ${label}`}><Arrow size={11} /></Expander>}
                  <TreeIcon><Icon name={icon} /></TreeIcon>
                  {flag && <Flag>{flag === "warn" ? <Warning /> : <Fresh />}</Flag>}
                  {label}
                </TreeRow>
              ))}
            </Tree>
          </SidePanel>
        </Sidebar>

        <Canvas>
          <SketchDrawing />
          <ViewBar>
            {viewTools.map(([icon, label, corner, on]) => (
              <ViewButton key={icon} aria-label={label} $on={on}>
                <Icon name={icon} />
                {corner && <Corner />}
              </ViewButton>
            ))}
          </ViewBar>
          <Watermark>
            <svg width="58" height="62" viewBox="0 0 58 62" fill="none" aria-hidden="true">
              <path fillRule="evenodd" fill="#3b4c58" d="M3 13C2 2 18 2 30 10c10 7 15 19 11 27-3 3-16 1-25-6C9 26 4 20 3 13zM7 16c1 8 8 15 17 19 7 3 14 3 15-1 1-8-4-16-12-22C18 6 6 6 7 16z" />
              <path fillRule="evenodd" fill="#8a2626" d="M36 26c6-6 16-8 20-2 5 8 1 20-8 28-7 6-16 7-18 3 4 2 10 1 15-4 8-8 11-18 7-24-3-4-10-4-16-1z" />
              <path d="M30 34c-12-3-22 5-18 13 2 3 6 4 10 2" stroke="#555c60" strokeWidth="2" />
            </svg>
            <WatermarkText>
              <WatermarkName>野火论坛</WatermarkName>
              <WatermarkLink href="#forum">www.proewildfire.cn</WatermarkLink>
            </WatermarkText>
          </Watermark>
        </Canvas>
      </Workspace>
    </Shell>
  );
}
